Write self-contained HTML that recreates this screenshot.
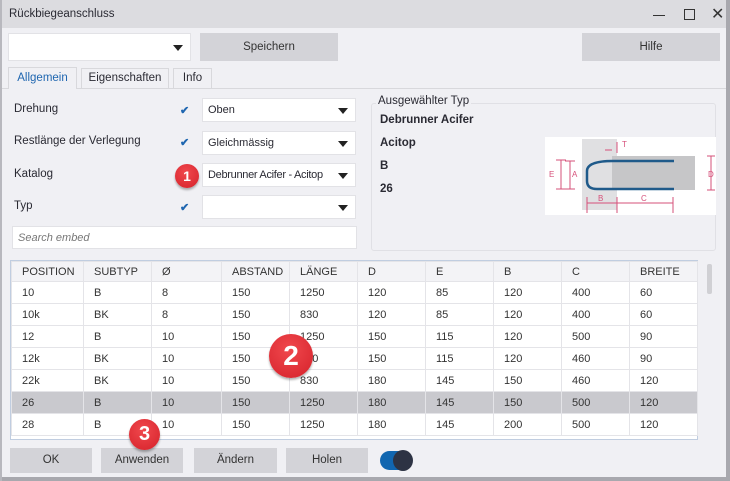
<!DOCTYPE html>
<html><head><meta charset="utf-8"><style>
*{box-sizing:border-box;margin:0;padding:0}
body{width:730px;height:481px;overflow:hidden;background:#f0f0f4;font-family:"Liberation Sans",sans-serif;font-size:11.5px;color:#2a2a33;position:relative}
.a{position:absolute}
.title{left:0;top:0;width:730px;height:28px;background:#dcdce0}
.btn{position:absolute;background:#d3d3d8;text-align:center;color:#333;font-size:11.5px}
.combo{position:absolute;background:#fff;border:1px solid #e2e2e6;white-space:nowrap;overflow:hidden}
.combo span{position:absolute;left:5px;top:5px;font-size:11px}
.combo i{position:absolute;right:7px;top:9px;width:0;height:0;border-left:5px solid transparent;border-right:5px solid transparent;border-top:6px solid #222}
.chk{position:absolute;color:#1f66b0;font-size:11px;font-weight:bold}
.lbl{position:absolute;font-size:11.5px}
.badge{position:absolute;border-radius:50%;background:radial-gradient(circle at 45% 35%,#f0484d,#d5212a);color:#fff;font-weight:bold;text-align:center;box-shadow:0 2px 2px rgba(0,0,0,.3)}
table{position:absolute;left:11px;top:261px;border-collapse:collapse;font-size:11px;background:#fff;table-layout:fixed}
td{height:22px;border:1px solid #e4e4e8;padding-left:10px;color:#333}
tr.h td{background:#f3f3f6;height:20px}
tr.s td{background:#c9c9ce}
</style></head><body>
<div class="a title"></div>
<div class="a" style="left:9px;top:8px;font-size:11.5px">Rückbiegeanschluss</div>
<div class="a" style="left:653px;top:15px;width:12px;height:1px;background:#333"></div>
<div class="a" style="left:684px;top:9px;width:11px;height:11px;border:1px solid #333"></div>
<div class="a" style="left:711px;top:4px;font-size:16px;color:#333">✕</div>
<div class="a" style="left:726px;top:0;width:4px;height:481px;background:#a8a8ae"></div>
<div class="a" style="left:0;top:477px;width:730px;height:4px;background:#a8a8ae"></div>
<div class="a" style="left:0;top:0;width:2px;height:481px;background:#b8b8be"></div>

<div class="combo" style="left:8px;top:33px;width:183px;height:28px"><i style="top:11px"></i></div>
<div class="btn" style="left:200px;top:33px;width:138px;height:28px;line-height:28px">Speichern</div>
<div class="btn" style="left:582px;top:33px;width:138px;height:28px;line-height:28px">Hilfe</div>

<div class="a" style="left:2px;top:88px;width:724px;height:1px;background:#d8d8dc"></div>
<div class="a" style="left:8px;top:67px;width:69px;height:22px;border:1px solid #d8d8dc;border-bottom:none;background:#f0f0f4;color:#1f66b0;text-align:center;line-height:20px">Allgemein</div>
<div class="a" style="left:81px;top:68px;width:88px;height:20px;border:1px solid #d8d8dc;border-bottom:none;text-align:center;line-height:18px">Eigenschaften</div>
<div class="a" style="left:173px;top:68px;width:39px;height:20px;border:1px solid #d8d8dc;border-bottom:none;text-align:center;line-height:18px">Info</div>

<div class="lbl" style="left:14px;top:103px">Drehung</div>
<div class="lbl" style="left:14px;top:135px">Restlänge der Verlegung</div>
<div class="lbl" style="left:14px;top:168px">Katalog</div>
<div class="lbl" style="left:14px;top:200px">Typ</div>
<div class="chk" style="left:180px;top:104px">✔</div>
<div class="chk" style="left:180px;top:136px">✔</div>
<div class="chk" style="left:180px;top:201px">✔</div>
<div class="combo" style="left:202px;top:98px;width:154px;height:24px"><span>Oben</span><i></i></div>
<div class="combo" style="left:202px;top:131px;width:154px;height:24px"><span>Gleichmässig</span><i></i></div>
<div class="combo" style="left:202px;top:163px;width:154px;height:24px"><span style="letter-spacing:-0.3px">Debrunner Acifer - Acitop</span><i style="background:#fff;box-shadow:0 0 0 0 #fff"></i></div>
<div class="combo" style="left:202px;top:195px;width:154px;height:24px"><i></i></div>
<div class="combo" style="left:12px;top:226px;width:345px;height:23px"><span style="color:#777;font-style:italic;top:5px">Search embed</span></div>
<div class="badge" style="left:175px;top:164px;width:24px;height:24px;line-height:24px;font-size:14px">1</div>

<div class="a" style="left:371px;top:103px;width:345px;height:148px;border:1px solid #e0e0e5;border-radius:3px"></div>
<div class="a" style="left:376px;top:95px;padding:0 2px;background:#f0f0f4">Ausgewählter Typ</div>
<div class="a" style="left:380px;top:114px;font-weight:bold">Debrunner Acifer</div>
<div class="a" style="left:380px;top:137px;font-weight:bold">Acitop</div>
<div class="a" style="left:380px;top:160px;font-weight:bold">B</div>
<div class="a" style="left:380px;top:183px;font-weight:bold">26</div>
<svg class="a" style="left:545px;top:137px" width="171" height="78" viewBox="0 0 171 78">
<rect width="171" height="78" fill="#fff"/>
<rect x="37" y="2" width="35" height="71" fill="#e0e0e2"/>
<rect x="67" y="19" width="83" height="34" fill="#c6c6c8"/>
<path d="M129 24H68Q42 24 42 34V44Q42 52 52 52H129" fill="none" stroke="#1f5a8a" stroke-width="2.5"/>
<g stroke="#d6507a" stroke-width="1" fill="none">
<path d="M11 23H21M11 52H21M16 23V52M20 24H30M20 52H30M25 24V52M162 19H170M162 53H170M166 19V53M42 66H72M72 66H128M42 60V76M72 60V76M128 60V76M60 13H67M72 5V16"/></g>
<g fill="#d6507a" font-size="8" font-family="Liberation Sans"><text x="77" y="10">T</text><text x="53" y="64">B</text><text x="96" y="64">C</text><text x="4" y="40">E</text><text x="27" y="40">A</text><text x="163" y="40">D</text></g>
</svg>

<div class="a" style="left:10px;top:260px;width:688px;height:180px;border:1px solid #c0cde0;background:#fff"></div>
<table>
<colgroup><col style="width:72px"><col style="width:68px"><col style="width:70px"><col style="width:68px"><col style="width:68px"><col style="width:68px"><col style="width:68px"><col style="width:68px"><col style="width:68px"><col style="width:68px"></colgroup>
<tr class="h"><td>POSITION</td><td>SUBTYP</td><td>Ø</td><td>ABSTAND</td><td>LÄNGE</td><td>D</td><td>E</td><td>B</td><td>C</td><td>BREITE</td></tr>
<tr><td>10</td><td>B</td><td>8</td><td>150</td><td>1250</td><td>120</td><td>85</td><td>120</td><td>400</td><td>60</td></tr>
<tr><td>10k</td><td>BK</td><td>8</td><td>150</td><td>830</td><td>120</td><td>85</td><td>120</td><td>400</td><td>60</td></tr>
<tr><td>12</td><td>B</td><td>10</td><td>150</td><td>1250</td><td>150</td><td>115</td><td>120</td><td>500</td><td>90</td></tr>
<tr><td>12k</td><td>BK</td><td>10</td><td>150</td><td>830</td><td>150</td><td>115</td><td>120</td><td>460</td><td>90</td></tr>
<tr><td>22k</td><td>BK</td><td>10</td><td>150</td><td>830</td><td>180</td><td>145</td><td>150</td><td>460</td><td>120</td></tr>
<tr class="s"><td>26</td><td>B</td><td>10</td><td>150</td><td>1250</td><td>180</td><td>145</td><td>150</td><td>500</td><td>120</td></tr>
<tr><td>28</td><td>B</td><td>10</td><td>150</td><td>1250</td><td>180</td><td>145</td><td>200</td><td>500</td><td>120</td></tr>
</table>
<div class="a" style="left:10px;top:440px;width:700px;height:6px;background:#f0f0f4"></div>
<div class="a" style="left:707px;top:264px;width:5px;height:30px;background:#d0d0d4;border-radius:2px"></div>
<div class="badge" style="left:269px;top:334px;width:44px;height:44px;line-height:44px;font-size:28px">2</div>

<div class="btn" style="left:10px;top:448px;width:82px;height:25px;line-height:25px">OK</div>
<div class="btn" style="left:101px;top:448px;width:82px;height:25px;line-height:25px">Anwenden</div>
<div class="btn" style="left:194px;top:448px;width:83px;height:25px;line-height:25px">Ändern</div>
<div class="btn" style="left:286px;top:448px;width:82px;height:25px;line-height:25px">Holen</div>
<div class="a" style="left:380px;top:451px;width:32px;height:19px;border-radius:10px;background:#1166b0"></div>
<div class="a" style="left:393px;top:450px;width:20px;height:21px;border-radius:50%;background:#2d3344"></div>
<div class="badge" style="left:129px;top:419px;width:31px;height:31px;line-height:31px;font-size:20px">3</div>
</body></html>
